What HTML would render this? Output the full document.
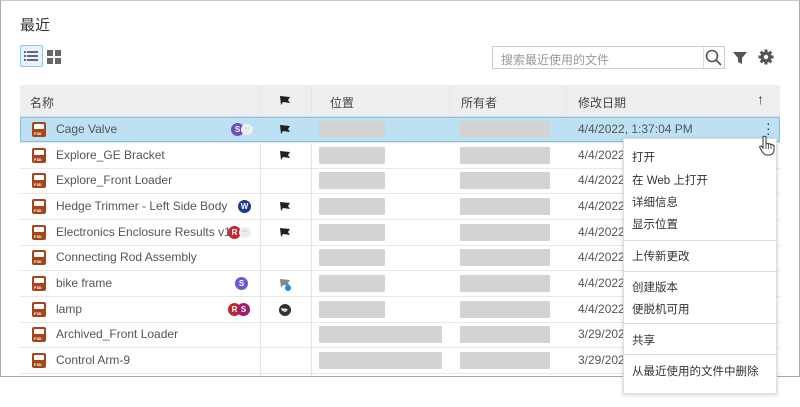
<!DOCTYPE html>
<html><head><meta charset="utf-8"><style>
*{margin:0;padding:0;box-sizing:border-box}
body{width:800px;height:407px;background:#fff;font-family:"Liberation Sans","Noto Sans CJK SC",sans-serif;position:relative;overflow:hidden;color:#555}
.frame{position:absolute;left:0;top:0;width:800px;height:377px;border:1px solid #a8a8a8;border-top:1px solid #c8c8c8}
.t{position:absolute;left:20px;top:14px;font-size:15px;color:#333}
.a{position:absolute}
.hdr{position:absolute;left:20px;top:85px;width:760px;height:32px;background:#eee;border-bottom:1px solid #ddd}
.hdr span{position:absolute;top:9px;font-size:12px;color:#444}
.vl{position:absolute;top:85px;width:1px;height:291px;background:#e6e6e6}
.row{position:absolute;left:20px;width:760px;height:25.7px;border-bottom:1px solid #e8e8e8}
.row.sel{background:#bde0f2;box-shadow:inset 0 0 0 1px #7cc3e6}
.nm{position:absolute;left:36px;top:5px;font-size:12px;color:#555;white-space:nowrap}
.ic{position:absolute;left:12px;top:5px;width:14px;height:15px;background:#a4451c;border-radius:2px}
.ic:before{content:"";position:absolute;left:2px;top:2px;width:10px;height:5px;background:#fff;border-radius:1px}
.ic:after{content:"F3D";position:absolute;left:2px;top:9px;font-size:4px;color:#fff;font-weight:bold}
.g{position:absolute;height:17px;top:4px;background:#d3d3d3;border-radius:1px}
.dt{position:absolute;left:558px;top:5px;font-size:12px;color:#555}
.av{position:absolute;top:6px;width:13px;height:13px;border-radius:50%;color:#fff;font-size:8px;text-align:center;line-height:13px;font-weight:bold}
.fl{position:absolute;left:258px;top:7px}
.menu{position:absolute;left:623px;top:138px;width:154px;height:256px;background:#fff;border:1px solid #ddd;box-shadow:0 1px 4px rgba(0,0,0,.18)}
.menu div{position:absolute;left:8px;font-size:11.5px;color:#333}
.menu hr{position:absolute;left:0;width:153px;border:0;border-top:1px solid #ddd}
</style></head><body>
<div class="frame"></div>
<div class="t">最近</div>
<div class="a" style="left:20px;top:45px;width:23px;height:22px;border:1px solid #8cc8ea;background:#e6f3fb;border-radius:2px">
<svg width="21" height="20" viewBox="0 0 21 20"><g fill="#667"><rect x="3" y="5" width="2" height="2"/><rect x="6" y="5" width="11" height="2"/><rect x="3" y="9" width="2" height="2"/><rect x="6" y="9" width="11" height="2"/><rect x="3" y="13" width="2" height="2"/><rect x="6" y="13" width="11" height="2"/></g></svg></div>
<svg class="a" style="left:47px;top:50px" width="14" height="14"><g fill="#666"><rect x="0" y="0" width="6" height="6"/><rect x="8" y="0" width="6" height="6"/><rect x="0" y="8" width="6" height="6"/><rect x="8" y="8" width="6" height="6"/></g></svg>
<div class="a" style="left:492px;top:46px;width:233px;height:23px;border:1px solid #ccc"><span style="position:absolute;left:8px;top:4px;font-size:12px;color:#999">搜索最近使用的文件</span><div style="position:absolute;left:210px;top:0;width:1px;height:21px;background:#ddd"></div></div>
<svg class="a" style="left:705px;top:49px" width="18" height="18"><circle cx="7" cy="7" r="5.5" fill="none" stroke="#555" stroke-width="1.6"/><line x1="11" y1="11" x2="16" y2="16" stroke="#555" stroke-width="1.8"/></svg>
<svg class="a" style="left:732px;top:51px" width="16" height="14"><path d="M1 1H15L10 7V13L6 11V7Z" fill="#555"/></svg>
<svg class="a" style="left:758px;top:49px" width="16" height="16" viewBox="0 0 16 16"><g fill="#555"><circle cx="8" cy="8" r="5.5"/><rect x="6.5" y="0.5" width="3" height="15"/><rect x="0.5" y="6.5" width="15" height="3"/><rect x="6.5" y="0.5" width="3" height="15" transform="rotate(45 8 8)"/><rect x="6.5" y="0.5" width="3" height="15" transform="rotate(-45 8 8)"/></g><circle cx="8" cy="8" r="2.2" fill="#fff"/></svg>
<div class="hdr"><span style="left:10px">名称</span><span style="left:310px">位置</span><span style="left:441px">所有者</span><span style="left:558px">修改日期</span>
<svg style="position:absolute;left:258px;top:10px" width="14" height="11"><path d="M2 1L12 2L10 5L12 8L5 7L3 10Z" fill="#222"/></svg>
<span style="left:737px;top:6px;font-size:14px">↑</span></div>
<div class="vl" style="left:260px"></div><div class="vl" style="left:311px"></div><div class="vl" style="left:449px;height:32px"></div><div class="vl" style="left:566px;height:32px"></div>

<div class="row sel" style="top:117px"><div class="ic"></div><div class="nm">Cage Valve</div><div class="av" style="left:211px;background:#6a4fc0">S</div><div style="position:absolute;left:221px;top:7px;width:12px;height:11px;border-radius:6px;background:#eee;font-size:7px;line-height:9px;text-align:center">··</div><svg class="fl" width="14" height="11"><path d="M2 1L12 2L10 5L12 8L5 7L3 10Z" fill="#222"/></svg><div class="g" style="left:299px;width:66px"></div><div class="g" style="left:440px;width:90px"></div><div class="dt">4/4/2022, 1:37:04 PM</div><div style="position:absolute;left:746px;top:4px;width:3px;font-size:14px;line-height:5px;color:#333">·<br>·<br>·</div></div>
<div class="row" style="top:143px"><div class="ic"></div><div class="nm">Explore_GE Bracket</div><svg class="fl" width="14" height="11"><path d="M2 1L12 2L10 5L12 8L5 7L3 10Z" fill="#222"/></svg><div class="g" style="left:299px;width:66px"></div><div class="g" style="left:440px;width:90px"></div><div class="dt">4/4/2022</div></div>
<div class="row" style="top:168px"><div class="ic"></div><div class="nm">Explore_Front Loader</div><div class="g" style="left:299px;width:66px"></div><div class="g" style="left:440px;width:90px"></div><div class="dt">4/4/2022</div></div>
<div class="row" style="top:194px"><div class="ic"></div><div class="nm">Hedge Trimmer - Left Side Body</div><div class="av" style="left:218px;background:#1e3c8c">W</div><svg class="fl" width="14" height="11"><path d="M2 1L12 2L10 5L12 8L5 7L3 10Z" fill="#222"/></svg><div class="g" style="left:299px;width:66px"></div><div class="g" style="left:440px;width:90px"></div><div class="dt">4/4/2022</div></div>
<div class="row" style="top:220px"><div class="ic"></div><div class="nm">Electronics Enclosure Results v1</div><div class="av" style="left:208px;background:#c0282e">R</div><div style="position:absolute;left:219px;top:7px;width:12px;height:11px;border-radius:6px;background:#eee;font-size:7px;line-height:9px;text-align:center">··</div><svg class="fl" width="14" height="11"><path d="M2 1L12 2L10 5L12 8L5 7L3 10Z" fill="#222"/></svg><div class="g" style="left:299px;width:66px"></div><div class="g" style="left:440px;width:90px"></div><div class="dt">4/4/2022</div></div>
<div class="row" style="top:245px"><div class="ic"></div><div class="nm">Connecting Rod Assembly</div><div class="g" style="left:299px;width:66px"></div><div class="g" style="left:440px;width:90px"></div><div class="dt">4/4/2022</div></div>
<div class="row" style="top:271px"><div class="ic"></div><div class="nm">bike frame</div><div class="av" style="left:215px;background:#6a5acd">S</div><svg class="fl" width="14" height="14"><path d="M2 1L12 2L10 5L12 8L5 7L3 10Z" fill="#888"/><circle cx="10" cy="10" r="3" fill="#1e88e5"/></svg><div class="g" style="left:299px;width:66px"></div><div class="g" style="left:440px;width:90px"></div><div class="dt">4/4/2022</div></div>
<div class="row" style="top:297px"><div class="ic"></div><div class="nm">lamp</div><div class="av" style="left:208px;background:#c0282e">R</div><div class="av" style="left:217px;background:#9c1c6e">S</div><svg class="fl" width="14" height="14"><circle cx="7" cy="6" r="6" fill="#333"/><path d="M3 4L10 5L8 8L4 7Z" fill="#ddd"/></svg><div class="g" style="left:299px;width:66px"></div><div class="g" style="left:440px;width:90px"></div><div class="dt">4/4/2022</div></div>
<div class="row" style="top:322px"><div class="ic"></div><div class="nm">Archived_Front Loader</div><div class="g" style="left:299px;width:123px"></div><div class="g" style="left:440px;width:90px"></div><div class="dt">3/29/2022</div></div>
<div class="row" style="top:348px"><div class="ic"></div><div class="nm">Control Arm-9</div><div class="g" style="left:299px;width:123px"></div><div class="g" style="left:440px;width:90px"></div><div class="dt">3/29/2022</div></div>

<div class="menu">
<div style="top:10px">打开</div><div style="top:33px">在 Web 上打开</div><div style="top:55px">详细信息</div><div style="top:77px">显示位置</div>
<hr style="top:101px"><div style="top:109px">上传新更改</div>
<hr style="top:132px"><div style="top:140px">创建版本</div><div style="top:162px">便脱机可用</div>
<hr style="top:184px"><div style="top:193px">共享</div>
<hr style="top:215px"><div style="top:224px">从最近使用的文件中删除</div>
</div>
<svg class="a" style="left:757px;top:135px" width="20" height="22" viewBox="0 0 20 22"><path d="M6 2Q7.5 0.5 9 2V9L11 8.5L13 9L15 9.5L17 10.5V16Q16 20 12 20H9Q6 19 3 13Q2 11 4 11L6 13Z" fill="#fff" stroke="#333" stroke-width="1"/><path d="M9 9V14M11.5 9V14M14 9.5V14" stroke="#333" stroke-width="0.8"/></svg>
</body></html>
